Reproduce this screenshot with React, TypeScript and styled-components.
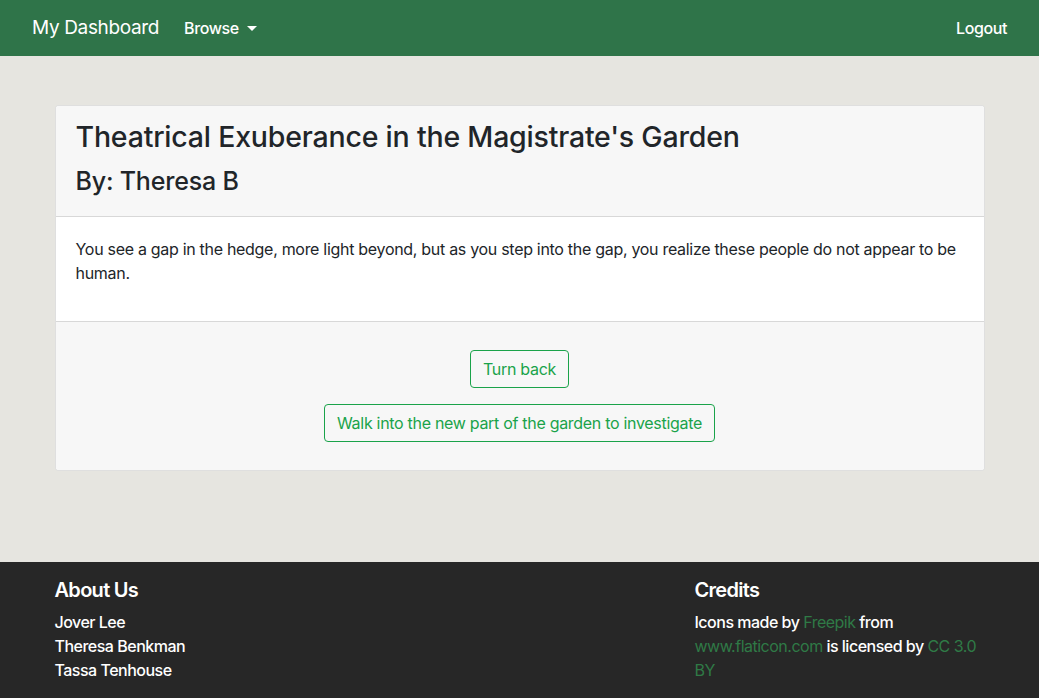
import styled, { createGlobalStyle } from "styled-components";

const GlobalStyle = createGlobalStyle`
  * { box-sizing: border-box; }
  body {
    margin: 0;
    font-family: Inter, "Liberation Sans", Arial, sans-serif;
    font-size: 16px;
    line-height: 1.5;
    letter-spacing: -0.3px;
    color: #212529;
    background: #e6e5e0;
  }
`;

const Page = styled.div`
  min-height: 100vh;
  display: flex;
  flex-direction: column;
`;

const Navbar = styled.nav`
  height: 56px;
  background: #2f7449;
  display: flex;
  align-items: center;
  padding: 0 32px;
  color: #fff;
`;

const Brand = styled.a`
  font-size: 19px;
  letter-spacing: -0.35px;
  color: #fff;
  margin-right: 25px;
`;

const NavLink = styled.a`
  font-size: 16px;
  font-weight: 500;
  letter-spacing: -0.4px;
  color: #fff;
  display: flex;
  align-items: center;
`;

const Caret = styled.span`
  display: inline-block;
  margin-left: 8px;
  border-top: 5px solid #fff;
  border-left: 5px solid transparent;
  border-right: 5px solid transparent;
`;

const Spacer = styled.div`
  flex: 1;
`;

const Main = styled.main`
  flex: 1;
  padding-top: 49px;
`;

const Container = styled.div`
  width: 960px;
  margin: 0 auto;
  padding: 0 15px;
`;

const Card = styled.div`
  background: #fff;
  border: 1px solid rgba(0, 0, 0, 0.125);
  border-radius: 4px;
  overflow: hidden;
`;

const CardHeader = styled.div`
  background: #f7f7f7;
  padding: 14px 20px 12px;
  border-bottom: 1px solid rgba(0, 0, 0, 0.125);
`;

const Title = styled.h3`
  margin: 0 0 12px;
  font-size: 28.5px;
  font-weight: 500;
  line-height: 1.2;
  letter-spacing: -0.2px;
`;

const Author = styled.h4`
  margin: 0 0 8px;
  font-size: 25px;
  font-weight: 500;
  line-height: 1.2;
  letter-spacing: -0.2px;
`;

const CardBody = styled.div`
  padding: 20px 20px 20px;
`;

const Text = styled.p`
  margin: 0 0 16px;
`;

const CardFooter = styled.div`
  background: #f7f7f7;
  border-top: 1px solid rgba(0, 0, 0, 0.125);
  padding: 28px 20px 28px;
  display: flex;
  flex-direction: column;
  align-items: center;
  gap: 16px;
`;

const Choice = styled.button`
  font-family: inherit;
  font-size: 16px;
  line-height: 1.5;
  letter-spacing: -0.3px;
  padding: 6px 12px;
  color: #1aa34a;
  background: transparent;
  border: 1px solid #1aa34a;
  border-radius: 4px;
`;

const Footer = styled.footer`
  background: #272727;
  color: #fff;
  padding: 16px 0;
`;

const Row = styled.div`
  display: grid;
  grid-template-columns: 640px 290px;
`;

const Col = styled.div``;

const FooterHeading = styled.h5`
  margin: 0 0 8px;
  font-size: 20px;
  font-weight: 600;
  line-height: 1.2;
  letter-spacing: -0.7px;
`;

const Line = styled.div`
  font-weight: 500;
  letter-spacing: -0.5px;
`;

const Link = styled.a`
  color: #2f7a46;
  font-weight: 400;
`;

export default function App() {
  return (
    <>
      <GlobalStyle />
      <Page>
        <Navbar>
          <Brand>My Dashboard</Brand>
          <NavLink>
            Browse <Caret />
          </NavLink>
          <Spacer />
          <NavLink>Logout</NavLink>
        </Navbar>
        <Main>
          <Container>
            <Card>
              <CardHeader>
                <Title>Theatrical Exuberance in the Magistrate's Garden</Title>
                <Author>By: Theresa B</Author>
              </CardHeader>
              <CardBody>
                <Text>
                  You see a gap in the hedge, more light beyond, but as you step into the gap, you
                  realize these people do not appear to be human.
                </Text>
              </CardBody>
              <CardFooter>
                <Choice>Turn back</Choice>
                <Choice>Walk into the new part of the garden to investigate</Choice>
              </CardFooter>
            </Card>
          </Container>
        </Main>
        <Footer>
          <Container>
            <Row>
              <Col>
                <FooterHeading>About Us</FooterHeading>
                <Line>Jover Lee</Line>
                <Line>Theresa Benkman</Line>
                <Line>Tassa Tenhouse</Line>
              </Col>
              <Col>
                <FooterHeading>Credits</FooterHeading>
                <Line>
                  Icons made by <Link>Freepik</Link> from <Link>www.flaticon.com</Link> is licensed
                  by <Link>CC 3.0 BY</Link>
                </Line>
              </Col>
            </Row>
          </Container>
        </Footer>
      </Page>
    </>
  );
}
